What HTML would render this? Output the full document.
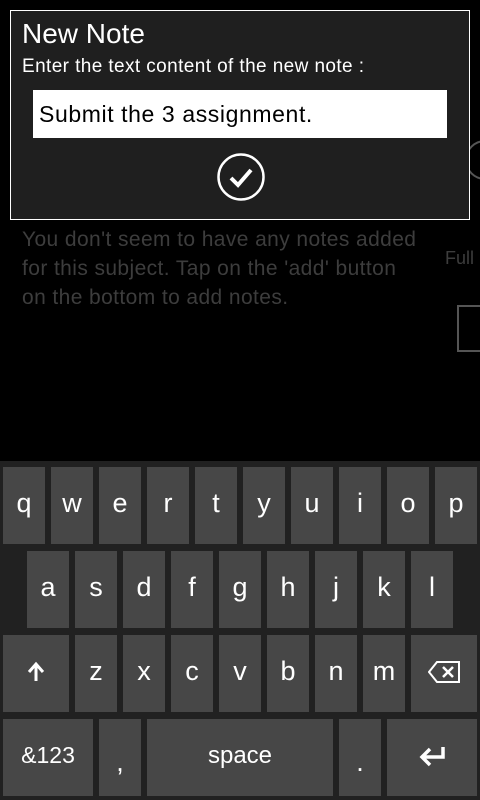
<!DOCTYPE html>
<html><head><meta charset="utf-8"><style>
*{margin:0;padding:0;box-sizing:border-box}
body{width:480px;height:800px;background:#000;position:relative;overflow:hidden;font-family:"Liberation Sans",sans-serif;color:#fff}
.bgtext{position:absolute;left:22px;top:225px;width:398px;font-size:21px;letter-spacing:0.4px;line-height:29px;color:#3d3d3d}
.full{position:absolute;left:445px;top:248px;font-size:18px;color:#3d3d3d}
.box{position:absolute;left:457px;top:305px;width:40px;height:47px;border:2px solid #555}
.arc{position:absolute;left:465px;top:140px;width:40px;height:40px;border:2px solid #555;border-radius:50%}
.dlg{position:absolute;left:10px;top:10px;width:460px;height:210px;background:#1f1f1f;border:1px solid #fff}
.title{position:absolute;left:11px;top:6px;font-size:28px;font-weight:300;line-height:34px}
.sub{position:absolute;left:11px;top:45px;font-size:19px;letter-spacing:0.4px;line-height:22px}
.inp{position:absolute;left:22px;top:79px;width:414px;height:48px;background:#fff;color:#000;font-size:23px;letter-spacing:0.6px;line-height:48px;padding-left:6px}
.chk{position:absolute;left:205px;top:141px}
.kb{position:absolute;left:0;top:461px;width:480px;height:339px;background:#212121}
.k{position:absolute;background:#474747;height:77px;display:flex;align-items:center;justify-content:center;font-size:27px;color:#fff;padding-bottom:4px}
</style></head><body>
<div class="arc"></div>
<div class="bgtext">You don't seem to have any notes added for this subject. Tap on the 'add' button on the bottom to add notes.</div>
<div class="full">Full</div>
<div class="box"></div>
<div class="dlg">
<div class="title">New Note</div>
<div class="sub">Enter the text content of the new note :</div>
<div class="inp">Submit the 3 assignment.</div>
<svg class="chk" width="50" height="50" viewBox="0 0 50 50"><circle cx="25" cy="25" r="22.5" fill="none" stroke="#fff" stroke-width="2.5"/><path d="M15 26 L22 33 L35 18" fill="none" stroke="#fff" stroke-width="4"/></svg>
</div>
<div class="kb">
<div class="k" style="left:3px;top:6px;width:42px">q</div>
<div class="k" style="left:51px;top:6px;width:42px">w</div>
<div class="k" style="left:99px;top:6px;width:42px">e</div>
<div class="k" style="left:147px;top:6px;width:42px">r</div>
<div class="k" style="left:195px;top:6px;width:42px">t</div>
<div class="k" style="left:243px;top:6px;width:42px">y</div>
<div class="k" style="left:291px;top:6px;width:42px">u</div>
<div class="k" style="left:339px;top:6px;width:42px">i</div>
<div class="k" style="left:387px;top:6px;width:42px">o</div>
<div class="k" style="left:435px;top:6px;width:42px">p</div>
<div class="k" style="left:27px;top:90px;width:42px">a</div>
<div class="k" style="left:75px;top:90px;width:42px">s</div>
<div class="k" style="left:123px;top:90px;width:42px">d</div>
<div class="k" style="left:171px;top:90px;width:42px">f</div>
<div class="k" style="left:219px;top:90px;width:42px">g</div>
<div class="k" style="left:267px;top:90px;width:42px">h</div>
<div class="k" style="left:315px;top:90px;width:42px">j</div>
<div class="k" style="left:363px;top:90px;width:42px">k</div>
<div class="k" style="left:411px;top:90px;width:42px">l</div>
<div class="k" style="left:3px;top:174px;width:66px"><svg width="20" height="22" viewBox="0 0 20 22"><path d="M10 20V4M3 11L10 3L17 11" fill="none" stroke="#fff" stroke-width="3"/></svg></div>
<div class="k" style="left:75px;top:174px;width:42px">z</div>
<div class="k" style="left:123px;top:174px;width:42px">x</div>
<div class="k" style="left:171px;top:174px;width:42px">c</div>
<div class="k" style="left:219px;top:174px;width:42px">v</div>
<div class="k" style="left:267px;top:174px;width:42px">b</div>
<div class="k" style="left:315px;top:174px;width:42px">n</div>
<div class="k" style="left:363px;top:174px;width:42px">m</div>
<div class="k" style="left:411px;top:174px;width:66px"><svg width="32" height="22" viewBox="0 0 32 22"><path d="M9 1H31V21H9L1 11Z" fill="none" stroke="#fff" stroke-width="2"/><path d="M15 6L25 16M25 6L15 16" stroke="#fff" stroke-width="2.5"/></svg></div>
<div class="k" style="left:3px;top:258px;width:90px;font-size:23px">&amp;123</div>
<div class="k" style="left:99px;top:258px;width:42px;padding-top:14px">,</div>
<div class="k" style="left:147px;top:258px;width:186px;font-size:24px">space</div>
<div class="k" style="left:339px;top:258px;width:42px;padding-top:14px">.</div>
<div class="k" style="left:387px;top:258px;width:90px"><svg width="28" height="22" viewBox="0 0 28 22"><path d="M25 2V12H5M12 4L4 12L12 20" fill="none" stroke="#fff" stroke-width="3.5"/></svg></div>
</div>
</body></html>
